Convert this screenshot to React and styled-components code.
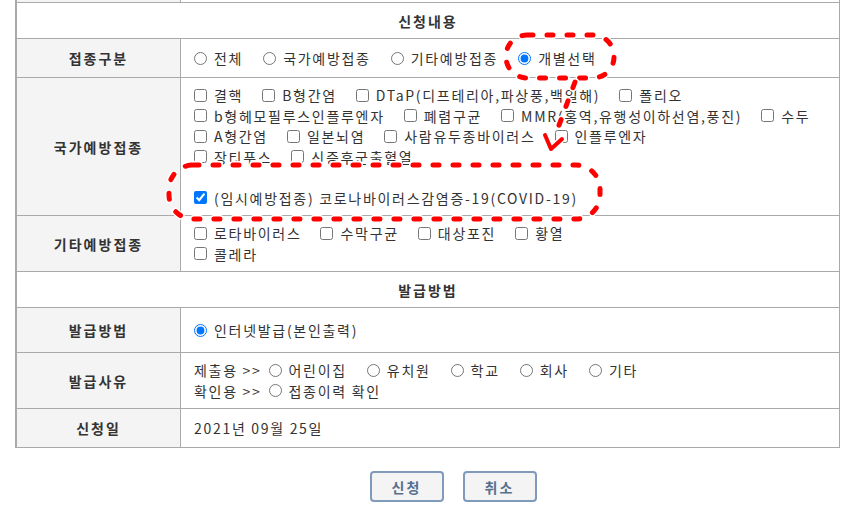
import React from 'react'
import styled, { createGlobalStyle } from 'styled-components'

const GlobalStyle = createGlobalStyle`
  html, body {
    margin: 0;
    padding: 0;
    background: #fff;
  }
  body {
    font-family: "Noto Sans CJK KR", "Noto Sans", sans-serif;
    color: #333;
  }
`;

const Page = styled.div`
  position: relative;
  width: 860px;
  height: 507px;
  overflow: hidden;
`;

const Table = styled.div`
  margin-left: 15px;
  width: 822px;
  border-left: 2px solid #aaa;
  border-right: 1px solid #aaa;
`;

const Row = styled.div`
  display: grid;
  grid-template-columns: 164px 1fr;
  min-height: ${p => p.$h}px;
  border-bottom: 1px solid #aaa;
`;

const HeadRow = styled.div`
  height: 35px;
  border-bottom: 1px solid #aaa;
  display: flex;
  align-items: center;
  justify-content: center;
  font-size: 14px;
  font-weight: bold;
  letter-spacing: 2px;
  color: #333;
`;

const Label = styled.div`
  box-sizing: border-box;
  background: #f4f4f4;
  border-right: 1px solid #aaa;
  display: flex;
  align-items: center;
  justify-content: center;
  font-size: 14px;
  font-weight: bold;
  letter-spacing: 2px;
  color: #333;
`;

const Value = styled.div`
  display: flex;
  flex-direction: column;
  justify-content: center;
  padding: 0 13px;
  font-size: 14px;
  letter-spacing: 1.7px;
  color: #333;
`;

const Line = styled.div`
  display: flex;
  align-items: center;
  height: 20.5px;
  white-space: nowrap;
`;

const Option = styled.label`
  display: inline-flex;
  align-items: center;
  margin-right: ${p => (p.$radio ? 20 : 19)}px;
`;

const Input = styled.input`
  margin: 0 7px 0 0;
  width: 13px;
  height: 13px;
  flex: none;
`;

const Prefix = styled.span`
  margin-right: 7px;
`;

const Buttons = styled.div`
  display: flex;
  justify-content: center;
  gap: 19px;
  margin-top: 23px;
  padding-left: 46px;
`;

const Button = styled.button`
  box-sizing: border-box;
  width: 74px;
  height: 31px;
  border: 2px solid #7f9aba;
  border-radius: 4px;
  background: #f4f4f4;
  font-family: "Noto Sans CJK KR", sans-serif;
  font-size: 14px;
  font-weight: bold;
  letter-spacing: 2px;
  color: #56708f;
  padding: 0;
`;

const Overlay = styled.svg`
  position: absolute;
  top: 0;
  left: 0;
  pointer-events: none;
`;

const national = [
  ['결핵', 'B형간염', 'DTaP(디프테리아,파상풍,백일해)', '폴리오'],
  ['b형헤모필루스인플루엔자', '폐렴구균', 'MMR(홍역,유행성이하선염,풍진)', '수두'],
  ['A형간염', '일본뇌염', '사람유두종바이러스', '인플루엔자'],
  ['장티푸스', '신증후군출혈열'],
];

const others = [
  ['로타바이러스', '수막구균', '대상포진', '황열'],
  ['콜레라'],
];

const Check = ({ text, checked }) => (
  <Option>
    <Input type="checkbox" defaultChecked={checked} />
    {text}
  </Option>
);

const Radio = ({ name, text, checked }) => (
  <Option $radio>
    <Input type="radio" name={name} defaultChecked={checked} />
    {text}
  </Option>
);

const Dash = ({ children }) => (
  <>
    <g fill="none" stroke="#fff" strokeWidth="8" strokeLinecap="round" strokeDasharray="6 14">
      {children}
    </g>
    <g fill="none" stroke="#f00" strokeWidth="5" strokeLinecap="round" strokeDasharray="6 14">
      {children}
    </g>
  </>
);

const Marks = () => (
  <Overlay width="860" height="507" viewBox="0 0 860 507">
    <Dash>
      <rect x="506" y="35" width="108" height="43" rx="21" />
    </Dash>
    <Dash>
      <rect x="169" y="165" width="431" height="54" rx="24" />
    </Dash>
    <Dash>
      <path d="M575 82 L555 136" />
    </Dash>
    <path d="M545 135 L551 149 L562 139" fill="none" stroke="#fff" strokeWidth="7" strokeLinecap="round" strokeLinejoin="round" />
    <path d="M545 135 L551 149 L562 139" fill="none" stroke="#f00" strokeWidth="4" strokeLinecap="round" strokeLinejoin="round" />
  </Overlay>
);

const App = () => (
  <Page>
    <GlobalStyle />
    <Table>
      <Row $h={2}>
        <Label />
        <Value />
      </Row>
      <HeadRow>신청내용</HeadRow>
      <Row $h={38}>
        <Label>접종구분</Label>
        <Value>
          <Line>
            <Radio name="kind" text="전체" />
            <Radio name="kind" text="국가예방접종" />
            <Radio name="kind" text="기타예방접종" />
            <Radio name="kind" text="개별선택" checked />
          </Line>
        </Value>
      </Row>
      <Row $h={137}>
        <Label>국가예방접종</Label>
        <Value>
          {national.map((line, i) => (
            <Line key={i}>
              {line.map(t => <Check key={t} text={t} />)}
            </Line>
          ))}
          <Line />
          <Line>
            <Check text="(임시예방접종) 코로나바이러스감염증-19(COVID-19)" checked />
          </Line>
        </Value>
      </Row>
      <Row $h={55}>
        <Label>기타예방접종</Label>
        <Value>
          {others.map((line, i) => (
            <Line key={i}>
              {line.map(t => <Check key={t} text={t} />)}
            </Line>
          ))}
        </Value>
      </Row>
      <HeadRow>발급방법</HeadRow>
      <Row $h={44}>
        <Label>발급방법</Label>
        <Value>
          <Line>
            <Radio name="method" text="인터넷발급(본인출력)" checked />
          </Line>
        </Value>
      </Row>
      <Row $h={55}>
        <Label>발급사유</Label>
        <Value>
          <Line>
            <Prefix>제출용 &gt;&gt;</Prefix>
            <Radio name="reason" text="어린이집" />
            <Radio name="reason" text="유치원" />
            <Radio name="reason" text="학교" />
            <Radio name="reason" text="회사" />
            <Radio name="reason" text="기타" />
          </Line>
          <Line>
            <Prefix>확인용 &gt;&gt;</Prefix>
            <Radio name="reason" text="접종이력 확인" />
          </Line>
        </Value>
      </Row>
      <Row $h={38}>
        <Label>신청일</Label>
        <Value>2021년 09월 25일</Value>
      </Row>
    </Table>
    <Buttons>
      <Button>신청</Button>
      <Button>취소</Button>
    </Buttons>
    <Marks />
  </Page>
);

export default App;
